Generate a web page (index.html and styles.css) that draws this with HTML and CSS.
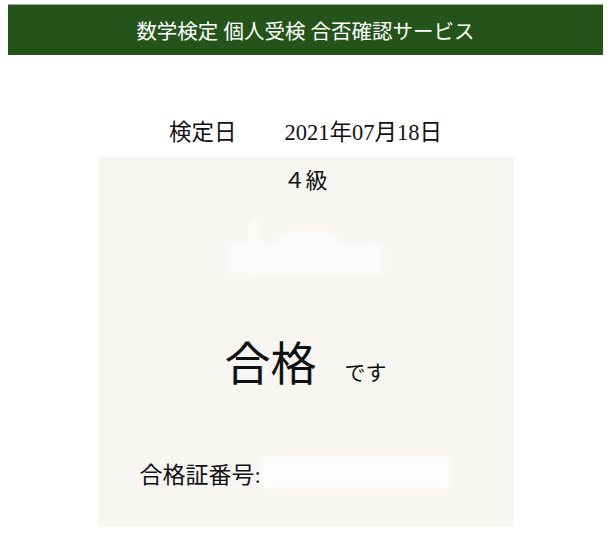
FILE: index.html
```html
<!DOCTYPE html>
<html lang="ja">
<head>
<meta charset="utf-8">
<title>合否確認サービス</title>
<link rel="stylesheet" href="styles.css">
</head>
<body>
<header class="site-header">数学検定 個人受検 合否確認サービス</header>
<main class="content">
  <p class="exam-date"><span class="label">検定日</span><span class="value">2021年07月18日</span></p>
  <section class="result-panel">
    <p class="grade">４級</p>
    <div class="name-mask"><span class="blob b1"></span><span class="blob b2"></span><span class="blob b3"></span></div>
    <p class="result"><span class="pass">合格</span><span class="desu">です</span></p>
    <p class="cert"><span class="cert-label">合格証番号:</span><span class="cert-mask"></span></p>
  </section>
</main>
</body>
</html>
```
FILE: styles.css
```css
html, body {
  background: #ffffff;
}
body {
  margin: 4px 8px 0;
  font-family: "Liberation Serif", "Noto Sans CJK JP", serif;
  color: #111111;
}
p {
  margin: 0;
}
.site-header {
  height: 50px;
  background: #24541a;
  border-top: 1px solid #9aa78f;
  color: #ffffff;
  font-size: 20.5px;
  display: flex;
  align-items: center;
  justify-content: center;
}
.content {
  display: flex;
  flex-direction: column;
  align-items: center;
}
.exam-date {
  margin-top: 63px;
  font-size: 22.5px;
  line-height: 30px;
  display: flex;
  gap: 48px;
}
.result-panel {
  margin-top: 9px;
  width: 416px;
  height: 370px;
  background: #f7f6f2;
  display: flex;
  flex-direction: column;
}
.grade {
  margin-top: 9px;
  text-align: center;
  font-size: 22px;
  line-height: 30px;
}
.name-mask {
  position: relative;
  margin: 17px auto 0;
  width: 155px;
  height: 72px;
}
.blob {
  position: absolute;
  background: #fbfbfa;
  filter: blur(3px);
  border-radius: 4px;
}
.b1 { left: 0; top: 30px; width: 155px; height: 32px; }
.b2 { left: 22px; top: 6px; width: 10px; height: 60px; }
.b3 { left: 50px; top: 20px; width: 60px; height: 20px; }
.result {
  margin-top: 50px;
  display: flex;
  justify-content: center;
  align-items: baseline;
  line-height: 60px;
  gap: 28px;
}
.pass {
  font-size: 46px;
}
.desu {
  font-size: 21px;
}
.cert {
  margin-top: 53px;
  padding-left: 42px;
  display: flex;
  align-items: center;
  height: 34px;
  font-size: 23px;
}
.cert-mask {
  display: inline-block;
  width: 190px;
  height: 32px;
  background: #fcfcfb;
  filter: blur(2px);
  border-radius: 3px;
}
```
